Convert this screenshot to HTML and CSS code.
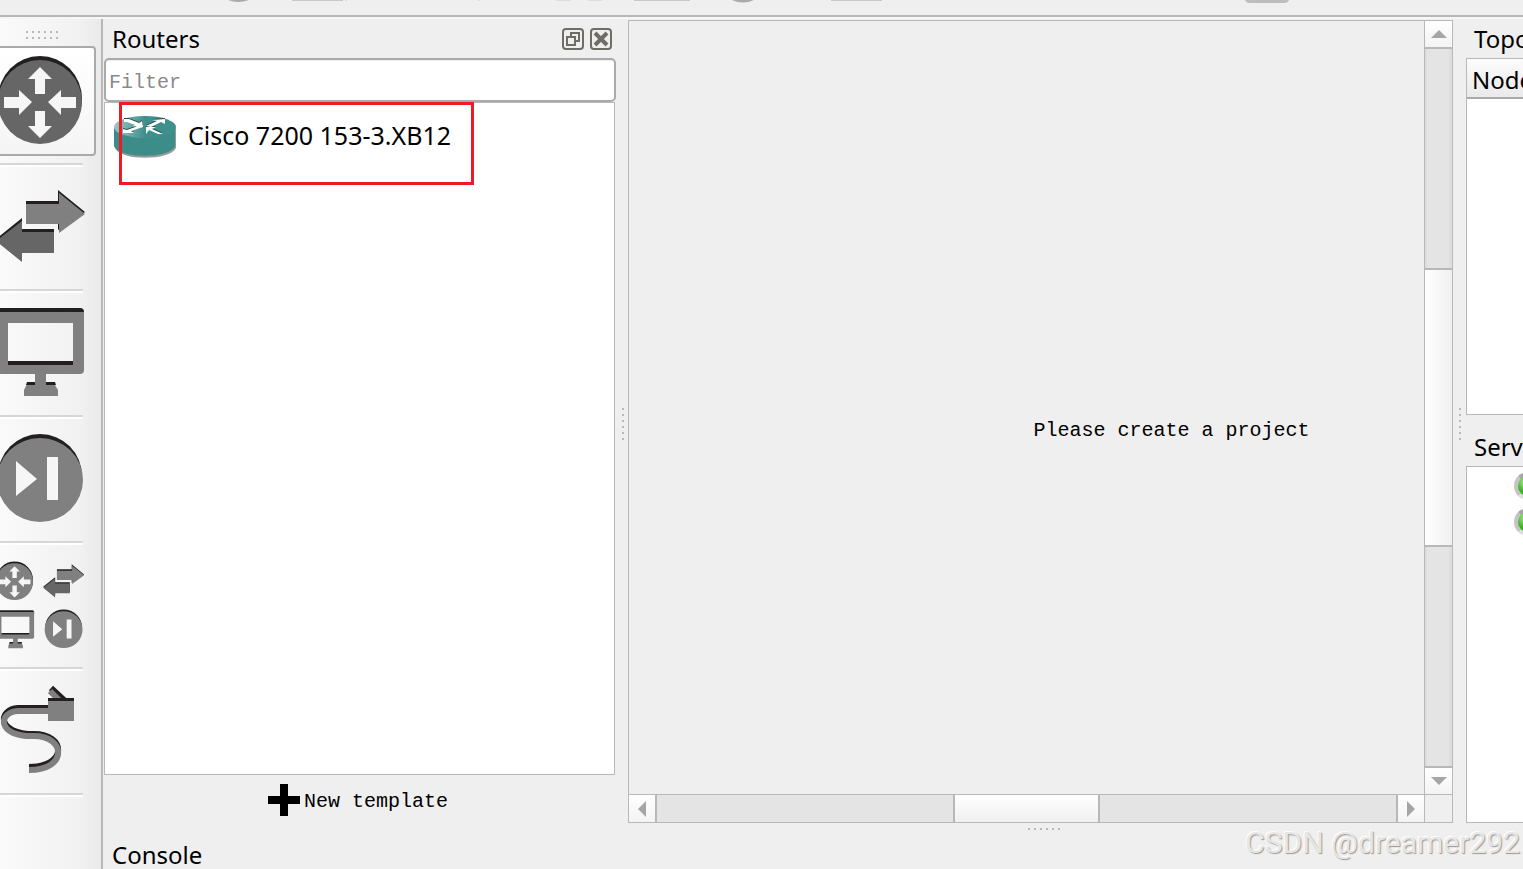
FILE: index.html
```html
<!doctype html>
<html lang="en">
<head>
	<meta charset="utf-8" />
	<title>GNS3</title>

	<link rel="stylesheet" href="styles.css">
</head>

<body>
	<svg class="defs" aria-hidden="true">
		<symbol id="router" viewBox="0 0 94 106" overflow="visible">
			<ellipse class="edge" cx="40" cy="53" rx="42" ry="43" />
			<ellipse class="face" cx="40" cy="56" rx="42" ry="42" />
			<path class="hole" d="M40 21L52 33H45V48H35V33H28ZM40 92L52 80H45V65H35V80H28ZM32 56L19 69V62H4V51H19V44ZM48 56L61 69V62H76V51H61V44Z" />
		</symbol>
		<symbol id="switch" viewBox="0 0 94 106" overflow="visible">
			<path class="edge" d="M26 29H58V18L85 40L58 58V49H26Z" />
			<path class="face" d="M26 32H59V21L85 42L59 61V52H26Z" />
			<path class="edge" d="M54 57H22V46L-4 67L22 85V78H54Z" />
			<path class="dark" d="M54 60H22V49L-4 69L22 90V81H54Z" />
		</symbol>
		<symbol id="monitor" viewBox="0 0 94 106" overflow="visible">
			<path class="edge" d="M-2 18V10H80Q84 10 84 14V18Z" />
			<path class="face" fill-rule="evenodd" d="M-2 14H84V72Q84 76 80 76H46V84H53L58 92V98H24V92L28 84H35V76H2Q-2 76 -2 72ZM8 25V67H73V25Z" />
			<path class="edge" d="M8 63H73V67H8ZM27 84H35V87H26ZM46 84H55L56 87H46Z" />
		</symbol>
		<symbol id="play" viewBox="0 0 94 106" overflow="visible">
			<ellipse class="edge" cx="40" cy="52" rx="42" ry="42" />
			<ellipse class="face" cx="40" cy="56" rx="43" ry="42" />
			<path class="hole" d="M16 37L37 55L16 72ZM47 33H58V76H47Z" />
		</symbol>
		<symbol id="cable" viewBox="0 0 94 106" overflow="visible">
			<path class="wire black" d="M49 32H18C-2 33-4 58 34 58C66 58 68 91 29 91M51 12L66 26" />
			<path class="wire" d="M49 35H18C-2 36-4 61 34 60C66 60 68 94 29 94M50 15L62 27" />
			<path class="edge" d="M48 22H74V30H48Z" />
			<path class="face" d="M48 25H74V45H48Z" />
		</symbol>
		<symbol id="dots-across" viewBox="0 0 34 10">
			<path class="dots" d="M1 1H34" />
		</symbol>
	</svg>

	<header class="toolbar">
		<svg width="1523" height="14" aria-hidden="true">
			<path fill="#aaa" d="M228 0H249Q238 4 228 0ZM732 0H754Q743 5 732 0Z" />
			<path fill="#c9c9c9" d="M292 0H343V1H292ZM634 0H690V1H634ZM831 0H882V1H831Z" />
			<path fill="#ddd" d="M556 0H571V1H556ZM588 0H602V1H588ZM345 0H347V1H345ZM478 0H480V1H478Z" />
			<path fill="#bdbdbd" d="M1245 0H1289Q1288 3 1284 3H1250Q1246 3 1245 0Z" />
		</svg>
	</header>

	<main>
		<nav class="devices" aria-label="Devices">
			<svg class="grip" width="34" height="10"><path class="dots" d="M0 2H34M0 8H34" /></svg>
			<button class="device active" aria-label="Routers"><svg><use href="#router" width="94" height="106" /></svg></button>
			<hr>
			<button class="device" aria-label="Switches"><svg><use href="#switch" width="94" height="106" /></svg></button>
			<hr>
			<button class="device" aria-label="End devices"><svg><use href="#monitor" width="94" height="106" /></svg></button>
			<hr>
			<button class="device" aria-label="Security devices"><svg><use href="#play" width="94" height="106" /></svg></button>
			<hr>
			<button class="device" aria-label="All devices">
				<svg>
					<use href="#router" width="94" height="106" transform="translate(-3 7) scale(.44)" />
					<use href="#switch" width="94" height="106" transform="translate(45 6) scale(.46)" />
					<use href="#monitor" width="94" height="106" transform="translate(-2 56) scale(.43)" />
					<use href="#play" width="94" height="106" transform="translate(46 55) scale(.44)" />
				</svg>
			</button>
			<hr>
			<button class="device" aria-label="Add a link"><svg><use href="#cable" width="94" height="106" /></svg></button>
			<hr>
		</nav>

		<div class="content">
			<div class="docks">
				<section class="routers">
					<div class="title">
						<h2>Routers</h2>
						<button class="dock-button" aria-label="Float">
							<svg width="22" height="22"><rect x="1" y="1" width="20" height="20" rx="3" /><path d="M9 8V5H17V13H14M5 9H13V17H5Z" /></svg>
						</button>
						<button class="dock-button" aria-label="Close">
							<svg width="22" height="22"><rect x="1" y="1" width="20" height="20" rx="3" /><path class="cross" d="M5 5L17 17M17 5L5 17" /></svg>
						</button>
					</div>
					<input class="filter" type="text" placeholder="Filter" aria-label="Filter">
					<ul class="templates">
						<li>
							<svg width="62" height="42" viewBox="0 0 62 42" aria-hidden="true">
								<defs>
									<linearGradient id="shine">
										<stop offset="0" stop-color="#9cc6c5" />
										<stop offset=".5" stop-color="#3f8f8d" />
									</linearGradient>
									<path id="arrows" d="M10 3H15L25 7L28 5L29 11L18 10L21 9L13 6H10ZM32 10L43 5L38 4L51 3V8L47 6L37 11ZM29 11L17 15L20 17H9V13L13 14L24 10ZM32 18V11H42L38 13L49 18H44L35 14Z" />
								</defs>
								<path fill="#999" d="M1 12V32C6 45 56 45 62 32V12Z" />
								<path fill="#3c8c8a" d="M0 11V30C5 43 56 43 61 30V11Z" />
								<ellipse fill="url(#shine)" cx="31" cy="11" rx="31" ry="11" />
								<use href="#arrows" y="-1" fill="#244f4e" />
								<use href="#arrows" fill="#fff" />
							</svg>
							<span>Cisco 7200 153-3.XB12</span>
						</li>
					</ul>
					<button class="new-template">
						<svg width="32" height="32" aria-hidden="true"><path d="M12 0H20V12H32V20H20V32H12V20H0V12H12Z" /></svg>
						<span>New template</span>
					</button>
					<div class="highlight"></div>
				</section>

				<div class="splitter"><svg width="2" height="34"><path class="dots" d="M1 0V34" /></svg></div>

				<section class="scene">
					<div class="canvas">Please create a project</div>
					<div class="scrollbar vertical">
						<button aria-label="Scroll up"><svg width="16" height="8"><path d="M0 8L8 0L16 8Z" /></svg></button>
						<div class="track"><div class="thumb"></div></div>
						<button aria-label="Scroll down"><svg width="16" height="8"><path d="M0 0L8 8L16 0Z" /></svg></button>
					</div>
					<div class="scrollbar horizontal">
						<button aria-label="Scroll left"><svg width="8" height="16"><path d="M8 0L0 8L8 16Z" /></svg></button>
						<div class="track"><div class="thumb"></div></div>
						<button aria-label="Scroll right"><svg width="8" height="16"><path d="M0 0L8 8L0 16Z" /></svg></button>
					</div>
					<div class="corner"></div>
					<svg class="bottom-grip" width="34" height="2"><path class="dots" d="M0 1H34" /></svg>
				</section>

				<div class="splitter"><svg width="2" height="34"><path class="dots" d="M1 0V34" /></svg></div>

				<aside class="summary">
					<section>
						<h2>Topology Summary</h2>
						<div class="tree nodes"><div class="column">Node</div></div>
					</section>
					<section class="servers">
						<h2>Servers Summary</h2>
						<div class="tree">
							<span class="led"></span>
							<span class="led"></span>
						</div>
					</section>
				</aside>
			</div>

			<section class="console">
				<h2>Console</h2>
			</section>
		</div>
	</main>

	<div class="watermark">CSDN @dreamer292</div>
</body>
</html>
```
FILE: styles.css
```css
*, *::before, *::after {
	box-sizing: border-box;
}

body {
	display: flex;
	flex-direction: column;
	height: 100vh;
	margin: 0;
	overflow: hidden;
	background: #efefef;
	color: #000;
	font: 24px/38px "Noto Sans", "Open Sans", sans-serif;
}

button {
	padding: 0;
	border: 0;
	background: none;
	color: inherit;
}

h2 {
	margin: 0;
	padding-left: 8px;
	font: inherit;
	white-space: nowrap;
}

svg {
	display: block;
	flex: none;
}

.defs {
	position: absolute;
	width: 0;
	height: 0;
}

.dots {
	fill: none;
	stroke: #b8b8b8;
	stroke-width: 2px;
	stroke-dasharray: 2 4;
}

.toolbar {
	flex: none;
	height: 19px;
	overflow: hidden;
	border-bottom: 2px solid #f6f6f6;
	box-shadow: inset 0 -2px #b4b7b4;
}

main {
	display: flex;
	flex: 1;
	min-height: 0;
}

/* device bar */

.devices {
	flex: none;
	width: 103px;
	overflow: hidden;
	border-right: 2px solid #b8b8b8;
	background: linear-gradient(to right, #fafafa, #f1f1f1 80%, #e9e9e9);
}

.grip {
	margin: 11px 0 6px 26px;
}

.device {
	display: block;
	width: 96px;
	height: 110px;
	margin: 5px 0 7px;
	border: 2px solid transparent;
	border-left: 0;
}

.grip + .device {
	margin-top: 6px;
}

.device.active {
	border-color: #aaa;
	border-radius: 0 4px 4px 0;
	background: linear-gradient(#fff, #f5f5f5);
}

.device svg {
	width: 94px;
	height: 106px;
	margin-top: -4px;
	overflow: visible;
}

.devices hr {
	width: 83px;
	height: 4px;
	margin: 0;
	border: solid #d6d6d6;
	border-width: 2px 0 0;
	background: #fff;
}

.edge {
	fill: #231f20;
}

.face {
	fill: #808080;
}

.dark, .active .face {
	fill: #666;
}

.active {
	--face: #666;
}

.face {
	fill: var(--face, #808080);
}

.hole {
	fill: #f6f6f6;
}

.wire {
	fill: none;
	stroke: #808080;
	stroke-width: 6px;
}

.wire.black {
	stroke: #231f20;
}

/* docks */

.content {
	display: flex;
	flex: 1;
	flex-direction: column;
	min-width: 0;
	padding: 1px 0 0 1px;
}

.docks {
	display: flex;
	flex: 1;
	min-height: 0;
}

.routers {
	position: relative;
	display: flex;
	flex: none;
	flex-direction: column;
	width: 512px;
}

.title {
	display: flex;
	align-items: center;
	gap: 6px;
	height: 38px;
	padding-right: 4px;
}

.title h2 {
	flex: 1;
}

.dock-button svg {
	fill: none;
	stroke: #6f6d66;
	stroke-width: 2px;
}

.dock-button .cross {
	stroke-width: 4px;
}

.filter {
	height: 44px;
	padding: 4px 3px 0;
	border: 2px solid #aaa;
	border-radius: 5px;
	background: #fff;
	box-shadow: inset 0 1px #ececec;
	font: 20px "Liberation Mono", monospace;
}

.filter::placeholder {
	color: #8a8a8a;
}

.templates {
	flex: 1;
	margin: 0 1px 0 0;
	padding: 13px 9px;
	border: 1px solid #b8b8b8;
	background: #fff;
	font-size: 25px;
	list-style: none;
}

.templates li {
	display: flex;
	gap: 12px;
	align-items: flex-start;
}

.new-template {
	display: flex;
	align-items: center;
	justify-content: center;
	gap: 4px;
	height: 48px;
	padding: 2px 4px 0 0;
	font: 20px "Liberation Mono", monospace;
}

.new-template span {
	padding-top: 3px;
}

.highlight {
	position: absolute;
	top: 82px;
	left: 15px;
	width: 355px;
	height: 83px;
	border: 3px solid #ed1c24;
}

.splitter {
	display: flex;
	flex: none;
	align-items: center;
	justify-content: center;
	width: 13px;
	padding: 6px 0 0 1px;
}

.routers + .splitter {
	width: 12px;
}

/* scene */

.scene {
	position: relative;
	display: grid;
	flex: 1;
	grid-template: 1fr 28px / 1fr 28px;
	min-width: 0;
	border: 1px solid #b8b8b8;
}

.canvas {
	display: grid;
	place-items: center;
	padding: 45px 0 0 290px;
	font: 20px "Liberation Mono", monospace;
}

.scrollbar {
	display: flex;
	background: #e4e4e4;
}

.scrollbar button {
	display: grid;
	flex: none;
	place-items: center;
	width: 26px;
	height: 26px;
	background: linear-gradient(#fff, #f3f3f3);
	fill: #a5a5a5;
}

.vertical button {
	width: 27px;
}

.horizontal button {
	height: 27px;
}

.track {
	display: flex;
	flex: 1;
	justify-content: center;
}

.thumb {
	background: linear-gradient(to right, #fff, #f0f0f0);
}

.vertical {
	flex-direction: column;
	border-left: 1px solid #b8b8b8;
}

.vertical .track {
	flex-direction: column;
	border: solid #b8b8b8;
	border-width: 2px 0;
	box-shadow: inset 2px 0 #dcdcdc, inset -3px 0 #dedede;
}

.vertical .thumb {
	height: 39%;
	border: solid #b8b8b8;
	border-width: 2px 0;
}

.horizontal {
	border-top: 1px solid #b8b8b8;
}

.horizontal .track {
	border: solid #b8b8b8;
	border-width: 0 2px;
}

.horizontal .thumb {
	width: 20%;
	border: solid #b8b8b8;
	border-width: 0 2px;
	background: linear-gradient(#fff, #f0f0f0);
}

.corner {
	border: solid #b8b8b8;
	border-width: 1px 0 0 1px;
}

.bottom-grip {
	position: absolute;
	bottom: -8px;
	left: 50%;
	margin-left: -13px;
}

/* summaries */

.summary {
	display: flex;
	flex: none;
	flex-direction: column;
	gap: 13px;
	width: 57px;
	overflow: hidden;
}

.summary section {
	display: flex;
	flex: 1;
	flex-direction: column;
}

.tree {
	display: flex;
	flex: 1;
	flex-direction: column;
	gap: 8px;
	padding: 5px 0 0 47px;
	border: 1px solid #b8b8b8;
	border-right: 0;
	background: #fff;
}

.nodes {
	padding: 0;
}

.column {
	height: 40px;
	padding-left: 5px;
	border-bottom: 2px solid #aaa;
	background: linear-gradient(#fcfcfc, #e9e9e9);
	line-height: 42px;
}

.led {
	flex: none;
	width: 28px;
	height: 28px;
	border: 4px solid #c4c4c4;
	border-top-color: #a5a5a5;
	border-bottom-color: #ddd;
	border-radius: 50%;
	background: radial-gradient(circle at 40% 30%, #b9efa0, #44b52c 50%, #238c12);
}

.console {
	flex: none;
	height: 46px;
	padding-top: 13px;
	overflow: hidden;
}

.watermark {
	position: absolute;
	right: 3px;
	bottom: 8px;
	color: #e6e6e6;
	font: 30px/36px Roboto, sans-serif;
	text-shadow: 1px 1px 1px #999, -1px -1px 1px #fff;
}
```
